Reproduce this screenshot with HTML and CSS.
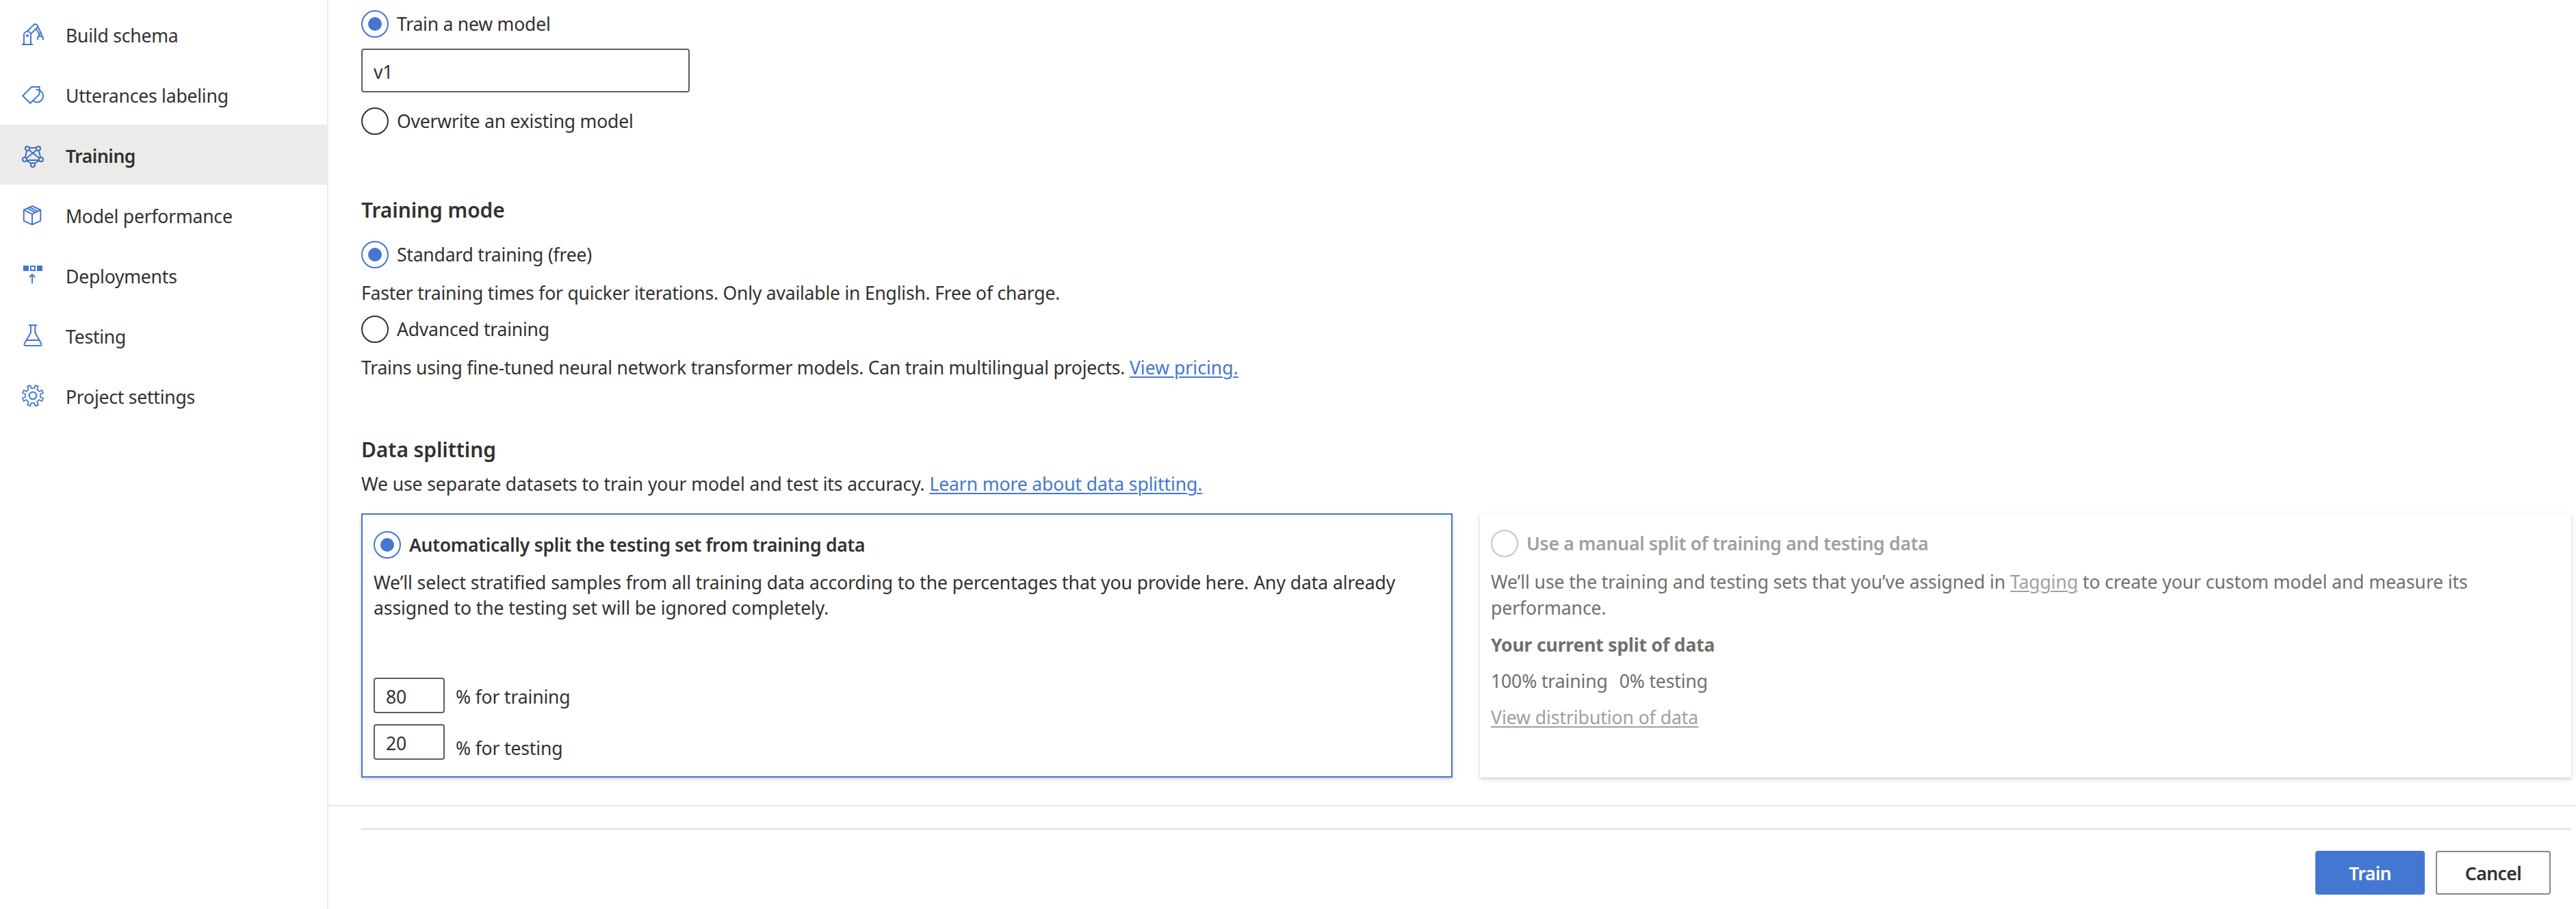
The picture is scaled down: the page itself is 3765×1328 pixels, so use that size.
FILE: index.html
```html
<!DOCTYPE html>
<html lang="en">
<head>
<meta charset="utf-8">
<title>Training</title>
<link rel="stylesheet" href="styles.css">
</head>
<body>
<div class="app">
  <nav class="sidebar">
    <a class="nav-item">
      <svg class="icon" viewBox="0 0 32 32"><path d="M0 31h16M3 31V17a5 5 0 0 1 10 0v14M8 11.5 17.3 2.3a3.5 3.5 0 0 1 5.7 1.4L28.3 15.5M13.3 15.3l7.5-7.5L25.5 16M20.8 7.8l2.4-2.4M23 24v-1.8q0-3 3-3.4M31 24v-1.8q0-3-3-3.4"/><circle cx="27" cy="17" r="2"/><circle class="solid" cx="8" cy="18" r="2"/></svg>
      <span>Build schema</span>
    </a>
    <a class="nav-item">
      <svg class="icon" viewBox="0 0 32 32"><path d="M14.3 5h11.4v10.7L12.3 28.8 1.2 18zM20.5 9h1.5a9.2 9.2 0 0 1 0 18.4q-3 0-5.2-1.8"/></svg>
      <span>Utterances labeling</span>
    </a>
    <a class="nav-item active">
      <svg class="icon" viewBox="0 0 32 32"><path d="M11 6h10M7.3 10.3 4.8 19.8M24.7 10.3l2.5 9.5M10.5 9.2 25.2 21M21.5 9.2 6.8 21M7 24h18M7 24.8l6.3 3.7M25 24.8l-6.3 3.7"/><circle cx="8" cy="7" r="3.1"/><circle cx="24" cy="7" r="3.1"/><circle cx="4" cy="23" r="3.1"/><circle cx="28" cy="23" r="3.1"/><circle cx="16" cy="31" r="3.1"/></svg>
      <span>Training</span>
    </a>
    <a class="nav-item">
      <svg class="icon" viewBox="0 0 32 32"><path d="M15 3l12.3 5.7v16L15 30.2 2.8 24.7v-16zM2.8 8.7 15 14.8l12.3-6.1M15 14.8v15.4M7.5 6.4l12.2 6M11.3 4.8l12.2 6"/></svg>
      <span>Model performance</span>
    </a>
    <a class="nav-item">
      <svg class="icon" viewBox="0 0 32 32"><path class="solid" d="M2 2h8v8H2zM22 2h8v8h-8z"/><path d="M13 3h6v6h-6zM15 28V15M10.8 19 15 14.8l4.2 4.2"/></svg>
      <span>Deployments</span>
    </a>
    <a class="nav-item">
      <svg class="icon" viewBox="0 0 32 32"><path d="M10 1h12M13 1v11L3.7 28q-1 3 1.6 3h21.4q2.6 0 1.6-3L19.3 12V1M7 23h18.5"/></svg>
      <span>Testing</span>
    </a>
    <a class="nav-item">
      <svg class="icon" viewBox="0 0 32 32"><path class="gear" d="M12.2.9 13.7 5.1H18.3L19.8.9 24 2.6 22.1 6.7 25.3 9.9 29.4 8 31.1 12.2 26.9 13.7V18.3L31.1 19.8 29.4 24 25.3 22.1 22.1 25.3 24 29.4 19.8 31.1 18.3 26.9H13.7L12.2 31.1 8 29.4 9.9 25.3 6.7 22.1 2.6 24 .9 19.8 5.1 18.3V13.7L.9 12.2 2.6 8 6.7 9.9 9.9 6.7 8 2.6z"/><circle cx="16" cy="16" r="5.3"/></svg>
      <span>Project settings</span>
    </a>
  </nav>

  <main class="main">
    <div class="content">
      <label class="option"><span class="radio checked"></span>Train a new model</label>
      <input class="field name-field" type="text" value="v1">
      <label class="option"><span class="radio"></span>Overwrite an existing model</label>

      <h2>Training mode</h2>
      <label class="option standard"><span class="radio checked"></span>Standard training (free)</label>
      <p class="hint">Faster training times for quicker iterations. Only available in English. Free of charge.</p>
      <label class="option advanced"><span class="radio"></span>Advanced training</label>
      <p class="hint">Trains using fine-tuned neural network transformer models. Can train multilingual projects. <a class="link pricing">View pricing.</a></p>

      <h2 class="splitting">Data splitting</h2>
      <p class="intro">We use separate datasets to train your model and test its accuracy. <a class="link">Learn more about data splitting.</a></p>

      <div class="cards">
        <section class="card selected">
          <label class="option title"><span class="radio checked"></span>Automatically split the testing set from training data</label>
          <p class="text">We’ll select stratified samples from all training data according to the percentages that you provide here. Any data already assigned to the testing set will be ignored completely.</p>
          <div class="percents">
            <div class="percent"><input class="field" type="text" value="80"><span>% for training</span></div>
            <div class="percent"><input class="field" type="text" value="20"><span class="low">% for testing</span></div>
          </div>
        </section>
        <section class="card disabled">
          <label class="option title"><span class="radio"></span>Use a manual split of training and testing data</label>
          <p class="text">We’ll use the training and testing sets that you’ve assigned in <a class="link">Tagging</a> to create your custom model and measure its performance.</p>
          <p class="current">Your current split of data</p>
          <p class="stats"><span>100% training</span><span>0% testing</span></p>
          <p class="view"><a class="link">View distribution of data</a></p>
        </section>
      </div>
    </div>

    <footer class="footer">
      <div class="actions">
        <button class="button primary">Train</button>
        <button class="button">Cancel</button>
      </div>
    </footer>
  </main>
</div>
</body>
</html>
```
FILE: styles.css
```css
* { box-sizing: border-box; }

body {
  margin: 0;
  background: #fff;
  color: #323130;
  font: 26.6px/38px "Segoe UI", "Noto Sans", sans-serif;
  letter-spacing: -0.25px;
}

p, h2 { margin: 0; }

.app {
  display: flex;
  height: 1328px;
  overflow: hidden;
}

/* Sidebar */
.sidebar {
  flex: none;
  width: 480px;
  padding-top: 6px;
  border-right: 2px solid #edebe9;
}

.nav-item {
  display: flex;
  align-items: center;
  height: 88px;
  padding-left: 32px;
  gap: 32px;
}

.nav-item span { padding-top: 4px; }

.nav-item.active {
  margin-right: -2px;
  background: #edebe9;
  font-weight: 600;
  letter-spacing: -0.5px;
}

.icon {
  flex: none;
  width: 32px;
  height: 32px;
  overflow: visible;
  fill: none;
  stroke: #4477d1;
  stroke-width: 2;
}

.active .icon { stroke: #3f6fc3; }
.icon .solid { fill: #4477d1; stroke: none; }
.icon .gear { stroke-width: 1.7; stroke-linejoin: round; }

/* Main column */
.main {
  flex: 1;
  min-width: 0;
}

.content {
  padding: 15px 7px 40px 48px;
}

h2 {
  margin: 90px 0 25px;
  font-size: 30px;
  line-height: 40px;
  font-weight: 600;
  letter-spacing: -0.1px;
}

h2.splitting { margin: 81px 0 11px; }

.option {
  display: flex;
  align-items: center;
  height: 40px;
  gap: 12px;
  line-height: 40px;
}

.radio {
  display: grid;
  place-items: center;
  width: 40px;
  height: 40px;
  border: 2px solid #323130;
  border-radius: 50%;
}

.radio.checked { border-color: #4477d1; }

.radio.checked::after {
  content: "";
  width: 20px;
  height: 20px;
  border-radius: 50%;
  background: #4477d1;
}

.field {
  display: block;
  border: 2px solid #605e5c;
  border-radius: 4px;
  background: #fff;
  color: #323130;
  font: inherit;
  letter-spacing: inherit;
  outline: none;
}

.name-field {
  width: 480px;
  height: 64px;
  margin: 16px 0 22px;
  padding: 4px 16px 0;
}

.hint { margin-top: 17px; }
.advanced { margin-top: 14px; }
.intro { margin-bottom: 24px; letter-spacing: -0.14px; }

.link {
  color: #4477d1;
  text-decoration: underline;
  text-decoration-thickness: 2px;
  text-underline-offset: 3px;
}

.pricing { letter-spacing: 0; }

/* Split cards */
.cards {
  display: grid;
  grid-template-columns: 1fr 1fr;
  gap: 40px;
}

.card {
  height: 386px;
  padding: 24px 16px 0;
  background: #fff;
  box-shadow: 0 3px 7px rgba(0, 0, 0, 0.13), 0 1px 2px rgba(0, 0, 0, 0.11);
}

.card.selected { border: 2px solid #4477d1; }
.title { font-weight: 600; letter-spacing: -0.3px; }
.text { margin-top: 17px; letter-spacing: -0.1px; }
.selected .text { line-height: 37px; }

.percents {
  display: grid;
  gap: 16px;
  margin-top: 83px;
}

.percent {
  display: flex;
  height: 52px;
  gap: 16px;
}

.percent .field {
  width: 104px;
  padding: 4px 16px 0;
}

.percent span {
  padding-top: 10px;
  line-height: 36px;
  letter-spacing: -0.18px;
}

.percent .low { padding-top: 17px; }

.disabled { color: #706f6d; }
.disabled .title, .disabled .link { color: #a19f9d; }
.disabled .radio { border-color: #c8c6c4; }

.current { margin-top: 16px; font-weight: 700; letter-spacing: -0.2px; }

.stats {
  display: flex;
  gap: 17px;
  margin-top: 15px;
  letter-spacing: -0.15px;
}

.view { margin-top: 15px; letter-spacing: -0.08px; }

/* Footer */
.footer {
  padding: 32px 7px 0 48px;
  border-top: 2px solid #eaeaea;
}

.actions {
  display: flex;
  justify-content: flex-end;
  gap: 16px;
  padding: 31px 30px 0 0;
  border-top: 2px solid #dedede;
}

.button {
  width: 168px;
  height: 64px;
  padding: 2px 0 0;
  border: 2px solid #8a8886;
  border-radius: 4px;
  background: #fff;
  color: #323130;
  font: inherit;
  font-weight: 600;
  letter-spacing: -0.6px;
}

.button.primary {
  width: 160px;
  border-color: #4477d1;
  background: #4477d1;
  color: #fff;
}
```
